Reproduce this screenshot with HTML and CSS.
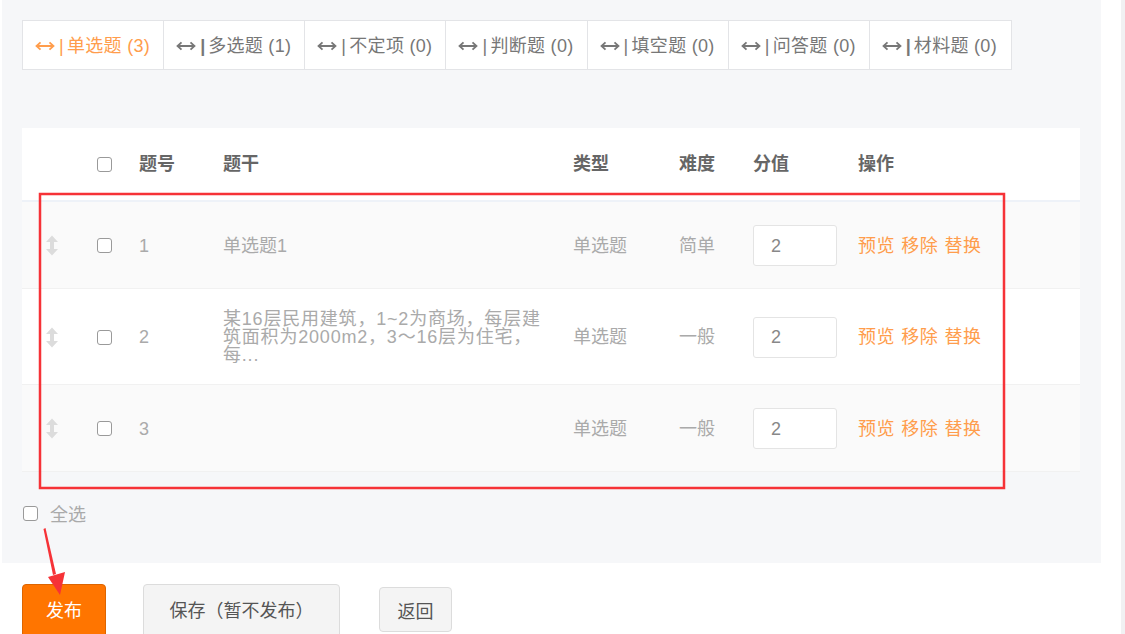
FILE: index.html
```html
<!DOCTYPE html>
<html lang="zh-CN">
<head>
<meta charset="utf-8">
<title>试卷题目</title>
<link rel="stylesheet" href="styles.css">
</head>
<body>
<div class="page">
  <div class="content">
    <div class="panel">
      <div class="tabs">
        <div class="tab active"><svg class="arr" viewBox="0 0 20 10"><path d="M1.5 5H18.5M5.5 1.3L1.5 5L5.5 8.7M14.5 1.3L18.5 5L14.5 8.7"/></svg><span class="bar">|</span>单选题 (3)</div>
        <div class="tab"><svg class="arr" viewBox="0 0 20 10"><path d="M1.5 5H18.5M5.5 1.3L1.5 5L5.5 8.7M14.5 1.3L18.5 5L14.5 8.7"/></svg><span class="bar thick">|</span>多选题 (1)</div>
        <div class="tab"><svg class="arr" viewBox="0 0 20 10"><path d="M1.5 5H18.5M5.5 1.3L1.5 5L5.5 8.7M14.5 1.3L18.5 5L14.5 8.7"/></svg><span class="bar">|</span>不定项 (0)</div>
        <div class="tab"><svg class="arr" viewBox="0 0 20 10"><path d="M1.5 5H18.5M5.5 1.3L1.5 5L5.5 8.7M14.5 1.3L18.5 5L14.5 8.7"/></svg><span class="bar">|</span>判断题 (0)</div>
        <div class="tab"><svg class="arr" viewBox="0 0 20 10"><path d="M1.5 5H18.5M5.5 1.3L1.5 5L5.5 8.7M14.5 1.3L18.5 5L14.5 8.7"/></svg><span class="bar">|</span>填空题 (0)</div>
        <div class="tab"><svg class="arr" viewBox="0 0 20 10"><path d="M1.5 5H18.5M5.5 1.3L1.5 5L5.5 8.7M14.5 1.3L18.5 5L14.5 8.7"/></svg><span class="bar">|</span>问答题 (0)</div>
        <div class="tab"><svg class="arr" viewBox="0 0 20 10"><path d="M1.5 5H18.5M5.5 1.3L1.5 5L5.5 8.7M14.5 1.3L18.5 5L14.5 8.7"/></svg><span class="bar thick">|</span>材料题 (0)</div>
      </div>

      <div class="table">
        <div class="row head">
          <div class="c c-drag"></div>
          <div class="c c-chk"><span class="box"></span></div>
          <div class="c">题号</div>
          <div class="c">题干</div>
          <div class="c">类型</div>
          <div class="c">难度</div>
          <div class="c">分值</div>
          <div class="c">操作</div>
        </div>
        <div class="row odd">
          <div class="c c-drag"><svg class="drag" viewBox="0 0 12 20"><polygon points="6,0 12,6.5 8,6.5 8,13.5 12,13.5 6,20 0,13.5 4,13.5 4,6.5 0,6.5"/></svg></div>
          <div class="c c-chk"><span class="box"></span></div>
          <div class="c">1</div>
          <div class="c">单选题1</div>
          <div class="c">单选题</div>
          <div class="c">简单</div>
          <div class="c"><span class="score">2</span></div>
          <div class="c ops"><span>预览</span><span>移除</span><span>替换</span></div>
        </div>
        <div class="row even">
          <div class="c c-drag"><svg class="drag" viewBox="0 0 12 20"><polygon points="6,0 12,6.5 8,6.5 8,13.5 12,13.5 6,20 0,13.5 4,13.5 4,6.5 0,6.5"/></svg></div>
          <div class="c c-chk"><span class="box"></span></div>
          <div class="c">2</div>
          <div class="c stem"><span class="ln">某16层民用建筑，1~2为商场，每层建</span><span class="ln">筑面积为2000m2，3～16层为住宅，</span><span class="ln">每...</span></div>
          <div class="c">单选题</div>
          <div class="c">一般</div>
          <div class="c"><span class="score">2</span></div>
          <div class="c ops"><span>预览</span><span>移除</span><span>替换</span></div>
        </div>
        <div class="row odd">
          <div class="c c-drag"><svg class="drag" viewBox="0 0 12 20"><polygon points="6,0 12,6.5 8,6.5 8,13.5 12,13.5 6,20 0,13.5 4,13.5 4,6.5 0,6.5"/></svg></div>
          <div class="c c-chk"><span class="box"></span></div>
          <div class="c">3</div>
          <div class="c"></div>
          <div class="c">单选题</div>
          <div class="c">一般</div>
          <div class="c"><span class="score">2</span></div>
          <div class="c ops"><span>预览</span><span>移除</span><span>替换</span></div>
        </div>
      </div>

      <div class="selall"><span class="box"></span><span class="selall-text">全选</span></div>
    </div>

    <div class="actions">
      <button class="btn primary">发布</button>
      <button class="btn save">保存（暂不发布）</button>
      <button class="btn back">返回</button>
    </div>
  </div>
  <div class="gutter"></div>
  <div class="scrollbar"></div>
</div>

<svg class="annot" viewBox="0 0 1125 634" width="1125" height="634">
  <rect x="40" y="194" width="964" height="294" fill="none" stroke="#f63237" stroke-width="2.5"/>
  <polygon points="43.5,529 45.5,528 56,574 53,575" fill="#f63237"/>
  <polygon points="48,577 65,572 60,595" fill="#f63237"/>
</svg>
</body>
</html>
```

FILE: styles.css
```css
* { box-sizing: border-box; }

html, body {
  margin: 0;
  padding: 0;
  background: #fff;
  font-family: "Liberation Sans", "Noto Sans CJK SC", sans-serif;
  font-size: 18px;
  overflow: hidden;
}

.page {
  display: flex;
  width: 1125px;
  height: 634px;
}

.content {
  width: 1101px;
  padding-left: 2px;
}

.gutter { width: 20px; }

.scrollbar {
  width: 4px;
  background: #f1f1f3;
}

.panel {
  background: #f6f7f9;
  height: 563px;
  padding: 20px 0 0 20px;
}

/* tabs */
.tabs {
  display: flex;
  width: 990px;
  height: 50px;
  background: #fff;
  border: 1px solid #e3e4e7;
}

.tab {
  width: 141.5px;
  display: flex;
  align-items: center;
  padding: 2px 0 0 12px;
  color: #777;
  border-right: 1px solid #e3e4e7;
  white-space: nowrap;
  line-height: 20px;
  letter-spacing: 0.3px;
}
.tab:last-child { border-right: none; }
.tab.active { color: #ff9d4c; }

.arr {
  width: 20px;
  height: 10px;
  margin-right: 4px;
  fill: none;
  stroke: currentColor;
  stroke-width: 1.8;
}
.bar {
  width: 8px;
  font-weight: 300;
}
.bar.thick { font-weight: 700; }

/* table */
.table {
  margin-top: 58px;
  width: 1058px;
}

.row {
  display: grid;
  grid-template-columns: 75px 42px 84px 350px 106px 74px 105px 222px;
  align-items: center;
  color: #aaa;
  line-height: 20px;
}

.head {
  background: #fff;
  height: 74px;
  border-bottom: 2px solid #eef2f8;
  color: #666;
  font-weight: 700;
}

.odd {
  background: #fafafa;
  padding: 23px 0 22px;
  border-bottom: 1px solid #f1f1f1;
}
.even {
  background: #fff;
  padding: 21px 0 20px;
  border-bottom: 1px solid #f1f1f1;
}

.c-drag {
  padding-left: 24px;
  display: flex;
  align-items: center;
}
.drag {
  width: 12px;
  height: 21px;
  fill: #dcdcdc;
}

.c-chk { display: flex; align-items: center; }

.box {
  display: inline-block;
  width: 15px;
  height: 15px;
  border: 1px solid #9a9a9a;
  border-radius: 3px;
  background: #fff;
}

.stem {
  display: flex;
  flex-direction: column;
  line-height: 18px;
  letter-spacing: 0.8px;
  color: #aaa;
  white-space: nowrap;
}
.ln { display: block; height: 18px; }

.score {
  display: flex;
  align-items: center;
  width: 84px;
  height: 41px;
  padding-left: 17px;
  background: #fff;
  border: 1px solid #e4e4e4;
  border-radius: 3px;
  color: #888;
}

.ops {
  display: flex;
  gap: 6px;
  color: #ff9d4c;
  letter-spacing: 0.6px;
}

/* select all */
.selall {
  display: flex;
  align-items: center;
  margin-top: 28px;
  margin-left: 1px;
}
.selall-text {
  margin-left: 12px;
  color: #aaa;
}

/* actions */
.actions {
  display: flex;
  align-items: flex-start;
  padding: 21px 0 0 20px;
}

.btn {
  font-family: "Liberation Sans", "Noto Sans CJK SC", sans-serif;
  font-size: 18px;
  border-radius: 4px;
  padding: 0;
  cursor: pointer;
}

.primary {
  width: 84px;
  height: 54px;
  padding-bottom: 4px;
  background: #ff7500;
  border: 1px solid #dd6500;
  color: #fff;
}

.save {
  margin-left: 37px;
  width: 197px;
  height: 54px;
  padding-bottom: 4px;
  background: #f4f4f4;
  border: 1px solid #dcdcdc;
  color: #555;
}

.back {
  margin-left: 39px;
  margin-top: 3px;
  width: 73px;
  height: 45px;
  background: #f4f4f4;
  border: 1px solid #dcdcdc;
  color: #555;
}

.annot {
  position: absolute;
  left: 0;
  top: 0;
  pointer-events: none;
}
```
